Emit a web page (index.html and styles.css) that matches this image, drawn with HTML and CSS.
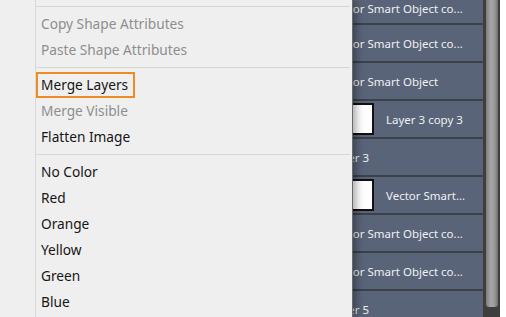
FILE: index.html
```html
<!DOCTYPE html>
<html lang="en">

<head>
    <meta charset="UTF-8">
    <meta name="viewport" content="width=device-width, initial-scale=1.0">
    <title>Layer menu</title>
    <link rel="stylesheet" href="styles.css">
</head>

<body>

    <div class="workspace">
        <!-- panel de capas detras del menu -->
        <div class="layers">
            <div class="layer-list">
                <div class="layer first"><span class="name">Vector Smart Object co...</span></div>
                <div class="layer"><span class="name">Vector Smart Object co...</span></div>
                <div class="layer"><span class="name">Vector Smart Object</span></div>
                <div class="layer thumbed"><span class="thumb"></span><span class="name">Layer 3 copy 3</span></div>
                <div class="layer"><span class="name">Layer 3</span></div>
                <div class="layer thumbed"><span class="thumb"></span><span class="name">Vector Smart...</span></div>
                <div class="layer"><span class="name">Vector Smart Object co...</span></div>
                <div class="layer"><span class="name">Vector Smart Object co...</span></div>
                <div class="layer"><span class="name">Layer 5</span></div>
            </div>
            <div class="scrollbar">
                <div class="scroll-thumb"></div>
            </div>
            <div class="edge"></div>
        </div>

        <!-- menu contextual -->
        <ul class="menu">
            <li class="sep"></li>
            <li class="item disabled">Copy Shape Attributes</li>
            <li class="item disabled">Paste Shape Attributes</li>
            <li class="sep"></li>
            <li class="item"><span class="highlight">Merge Layers</span></li>
            <li class="item disabled">Merge Visible</li>
            <li class="item">Flatten Image</li>
            <li class="sep"></li>
            <li class="item">No Color</li>
            <li class="item">Red</li>
            <li class="item">Orange</li>
            <li class="item">Yellow</li>
            <li class="item">Green</li>
            <li class="item">Blue</li>
        </ul>
    </div>

</body>

</html>
```

FILE: styles.css
```css
body {
    margin: 0;
    padding: 0;
    background-color: #ffffff;
    font-family: "Noto Sans", "Liberation Sans", sans-serif;
}

.workspace {
    position: relative;
    width: 506px;
    height: 317px;
    overflow: hidden;
}

.layers {
    display: flex;
    height: 100%;
}

.layer-list {
    width: 483px;
    background-color: #5a6478;
}

.layer {
    display: flex;
    align-items: center;
    height: 36px;
    padding-left: 330px;
    border-bottom: 2px solid #3b4049;
    color: #eef0f4;
    font-size: 11.5px;
    white-space: nowrap;
}

/* la primera fila esta cortada arriba */
.layer.first {
    height: 16px;
    padding-bottom: 7px;
}

.layer.thumbed {
    padding-left: 320px;
}

.thumb {
    width: 50px;
    height: 28px;
    margin-right: 12px;
    background-color: #ffffff;
    border: 2px solid #111111;
    flex-shrink: 0;
}

.scrollbar {
    width: 17px;
    background-color: #3e3e3e;
    padding: 0 2px 0 3px;
    box-sizing: border-box;
}

.scroll-thumb {
    height: 307px;
    border-radius: 0 0 3px 3px;
    background: linear-gradient(to right, #7c7c7c, #a6a6a6 40%, #9a9a9a 70%, #6e6e6e);
}

.edge {
    width: 6px;
    background-color: #ffffff;
}

.menu {
    position: absolute;
    top: 0;
    left: 0;
    width: 352px;
    height: 317px;
    margin: 0;
    padding: 0;
    list-style: none;
    background-color: #f0efef;
    border-right: 1px solid #6a6a6a;
    box-shadow: 3px 0 8px rgba(0, 0, 0, 0.35);
}

.menu::before {
    content: "";
    position: absolute;
    top: 0;
    bottom: 0;
    left: 35px;
    border-left: 1px solid #d9d9d9;
}

.sep {
    height: 1px;
    margin: 4px 2px 4px 36px;
    background-color: #d6d6d6;
}

.sep:first-child {
    margin-top: 6px;
}

.item {
    height: 26px;
    line-height: 26px;
    padding-left: 41px;
    font-size: 13.7px;
    color: #161616;
}

.item.disabled {
    color: #8e8e8e;
}

.highlight {
    display: inline-block;
    box-sizing: border-box;
    margin-left: -5px;
    padding: 0 5px 0 3px;
    height: 26px;
    line-height: 22px;
    border: 2px solid #f08a24;
}
```
